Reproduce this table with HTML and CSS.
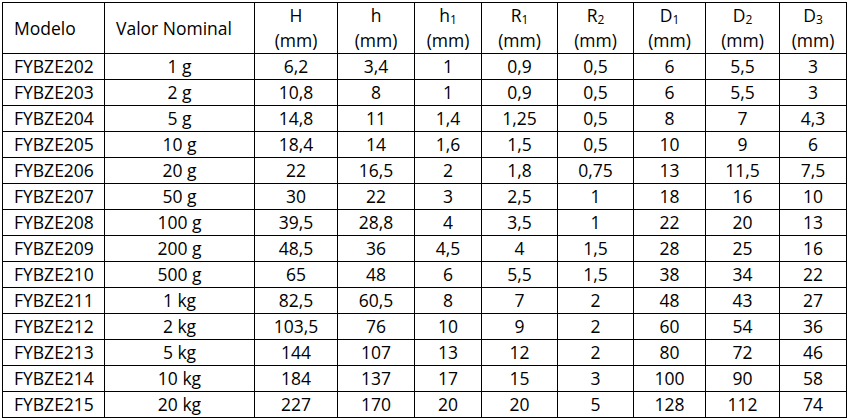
FILE: index.html
```html
<!DOCTYPE html>
<html lang="pt">
<head>
<meta charset="utf-8">
<title>Tabela de pesos</title>
<link rel="stylesheet" href="styles.css">
</head>
<body>
<table class="spec">
  <colgroup>
    <col class="c-model"><col class="c-val"><col class="c-H"><col class="c-h"><col class="c-h1"><col class="c-r1"><col class="c-r2"><col class="c-d1"><col class="c-d2"><col class="c-d3">
  </colgroup>
  <thead>
    <tr class="head">
      <th class="left">Modelo</th>
      <th class="left">Valor Nominal</th>
      <th>H<br>(mm)</th>
      <th>h<br>(mm)</th>
      <th>h<sub>1</sub><br>(mm)</th>
      <th>R<sub>1</sub><br>(mm)</th>
      <th>R<sub>2</sub><br>(mm)</th>
      <th>D<sub>1</sub><br>(mm)</th>
      <th>D<sub>2</sub><br>(mm)</th>
      <th>D<sub>3</sub><br>(mm)</th>
    </tr>
  </thead>
  <tbody>
    <tr><td class="left">FYBZE202</td><td>1 g</td><td>6,2</td><td>3,4</td><td>1</td><td>0,9</td><td>0,5</td><td>6</td><td>5,5</td><td>3</td></tr>
    <tr><td class="left">FYBZE203</td><td>2 g</td><td>10,8</td><td>8</td><td>1</td><td>0,9</td><td>0,5</td><td>6</td><td>5,5</td><td>3</td></tr>
    <tr><td class="left">FYBZE204</td><td>5 g</td><td>14,8</td><td>11</td><td>1,4</td><td>1,25</td><td>0,5</td><td>8</td><td>7</td><td>4,3</td></tr>
    <tr><td class="left">FYBZE205</td><td>10 g</td><td>18,4</td><td>14</td><td>1,6</td><td>1,5</td><td>0,5</td><td>10</td><td>9</td><td>6</td></tr>
    <tr><td class="left">FYBZE206</td><td>20 g</td><td>22</td><td>16,5</td><td>2</td><td>1,8</td><td>0,75</td><td>13</td><td>11,5</td><td>7,5</td></tr>
    <tr><td class="left">FYBZE207</td><td>50 g</td><td>30</td><td>22</td><td>3</td><td>2,5</td><td>1</td><td>18</td><td>16</td><td>10</td></tr>
    <tr><td class="left">FYBZE208</td><td>100 g</td><td>39,5</td><td>28,8</td><td>4</td><td>3,5</td><td>1</td><td>22</td><td>20</td><td>13</td></tr>
    <tr><td class="left">FYBZE209</td><td>200 g</td><td>48,5</td><td>36</td><td>4,5</td><td>4</td><td>1,5</td><td>28</td><td>25</td><td>16</td></tr>
    <tr><td class="left">FYBZE210</td><td>500 g</td><td>65</td><td>48</td><td>6</td><td>5,5</td><td>1,5</td><td>38</td><td>34</td><td>22</td></tr>
    <tr><td class="left">FYBZE211</td><td>1 kg</td><td>82,5</td><td>60,5</td><td>8</td><td>7</td><td>2</td><td>48</td><td>43</td><td>27</td></tr>
    <tr><td class="left">FYBZE212</td><td>2 kg</td><td>103,5</td><td>76</td><td>10</td><td>9</td><td>2</td><td>60</td><td>54</td><td>36</td></tr>
    <tr><td class="left">FYBZE213</td><td>5 kg</td><td>144</td><td>107</td><td>13</td><td>12</td><td>2</td><td>80</td><td>72</td><td>46</td></tr>
    <tr><td class="left">FYBZE214</td><td>10 kg</td><td>184</td><td>137</td><td>17</td><td>15</td><td>3</td><td>100</td><td>90</td><td>58</td></tr>
    <tr><td class="left">FYBZE215</td><td>20 kg</td><td>227</td><td>170</td><td>20</td><td>20</td><td>5</td><td>128</td><td>112</td><td>74</td></tr>
  </tbody>
</table>
</body>
</html>
```

FILE: styles.css
```css
html, body {
  margin: 0;
  padding: 0;
  background: #ffffff;
}

body {
  padding: 2px 0 0 2px;
  font-family: "Open Sans", "Noto Sans", "Liberation Sans", sans-serif;
  font-size: 17.5px;
  color: #000000;
}

.spec {
  border-collapse: collapse;
  table-layout: fixed;
  width: 844px;
}

.c-model { width: 102px; }
.c-val { width: 150px; }
.c-H { width: 83px; }
.c-h { width: 77px; }
.c-h1 { width: 67px; }
.c-r1 { width: 76px; }
.c-r2 { width: 76px; }
.c-d1 { width: 72px; }
.c-d2 { width: 74px; }
.c-d3 { width: 67px; }

.spec th,
.spec td {
  border: 1px solid #000000;
  padding: 0;
  text-align: center;
  vertical-align: middle;
  font-weight: normal;
  white-space: nowrap;
}

.spec .head th {
  height: 50px;
  line-height: 25px;
}

.spec tbody td {
  height: 25px;
  line-height: 25px;
}

.spec .left {
  text-align: left;
  padding-left: 11px;
}

.spec sub {
  font-size: 12px;
  line-height: 0;
  vertical-align: -2px;
}
```
